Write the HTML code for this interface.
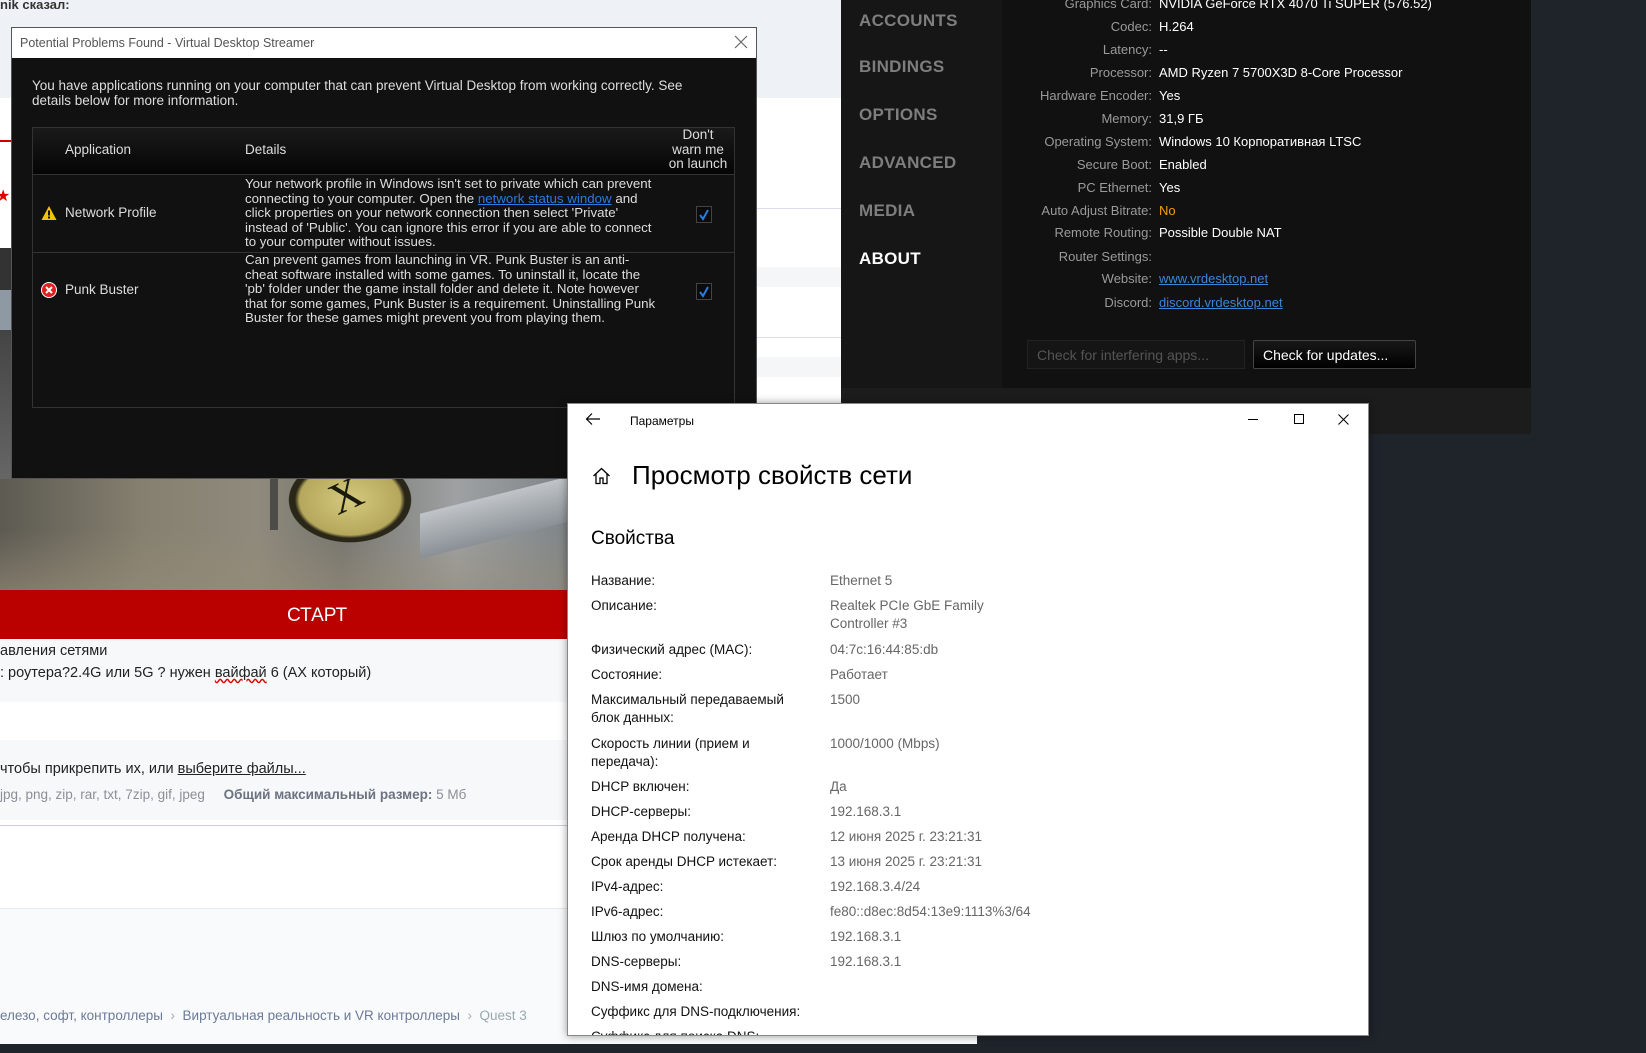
<!DOCTYPE html>
<html><head><meta charset="utf-8">
<style>
*{margin:0;padding:0;box-sizing:border-box}
body{width:1646px;height:1053px;overflow:hidden;background:#1f232a;position:relative;font-family:"Liberation Sans",sans-serif}
.a{position:absolute}
.n{font-family:"Liberation Sans",sans-serif}
.web{font-family:"Liberation Sans","DejaVu Sans",sans-serif;white-space:nowrap}
.vdl{color:#9a9a9a;text-align:right;width:300px;left:852px;font-size:13px}
.vdv{left:1159px;color:#fff;font-size:13px;white-space:nowrap}
.nav{left:859px;font-weight:bold;font-size:17px;color:#7e7e7e;letter-spacing:.3px}
.sl{left:591px;font-size:13.5px;color:#111;line-height:18px}
.sv{left:830px;font-size:13.5px;color:#666;line-height:18px}
</style></head><body>

<!-- web page -->
<div class="a" style="left:0;top:0;width:977px;height:1044px;background:#fff"></div>
<div class="a" style="left:0;top:0;width:841px;height:98px;background:#eef1f5"></div>
<div class="a web" style="left:0;top:-3px;font-size:13px;font-weight:bold;color:#333">nik сказал:</div>
<div class="a" style="left:757px;top:208px;width:84px;height:1px;background:#dde"></div>
<div class="a" style="left:757px;top:267px;width:84px;height:20px;background:#f5f6f8"></div>
<div class="a" style="left:757px;top:337px;width:84px;height:1px;background:#dde"></div>
<div class="a" style="left:757px;top:357px;width:84px;height:20px;background:#f5f6f8"></div>
<div class="a" style="left:0;top:140px;width:12px;height:2px;background:#c00"></div>
<div class="a" style="left:0;top:248px;width:12px;height:42px;background:#333"></div>
<div class="a" style="left:0;top:290px;width:12px;height:40px;background:#8e99a3"></div>
<div class="a" style="left:0;top:330px;width:12px;height:150px;background:linear-gradient(#444,#666)"></div>
<div class="a" style="left:-4px;top:186px;color:#d00;font-size:16px">★</div>
<!-- banner -->
<div class="a" style="left:0;top:479px;width:570px;height:111px;background:linear-gradient(90deg,#5d5a52 0%,#85806f 25%,#8f8a7c 45%,#76756f 60%,#9ea1a2 80%,#7e8488 100%)"></div>
<div class="a" style="left:0;top:530px;width:570px;height:60px;background:linear-gradient(180deg,rgba(90,85,75,0),rgba(150,140,120,.6))"></div>
<div class="a" style="left:285px;top:455px;width:130px;height:90px;border-radius:50%;background:radial-gradient(#d4c97e 0%,#b5a85c 55%,#2a2618 60%,#2a2618 66%,rgba(0,0,0,0) 67%)"></div>
<div class="a" style="left:330px;top:470px;font-size:44px;color:#1a1a10;font-family:'Liberation Serif',serif;transform:rotate(-25deg)">X</div>
<div class="a" style="left:420px;top:495px;width:150px;height:45px;background:linear-gradient(#c0c4c8,#8a9096);transform:skewY(-14deg)"></div>
<div class="a" style="left:270px;top:470px;width:8px;height:60px;background:#333;opacity:.7"></div>
<div class="a" style="left:0;top:590px;width:570px;height:49px;background:#bb0000"></div>
<div class="a web" style="left:287px;top:605px;color:#fff;font-size:19px">СТАРТ</div>
<div class="a" style="left:0;top:639px;width:570px;height:63px;background:#f7f8fa"></div>
<div class="a web" style="left:0;top:643px;font-size:14.5px;color:#222">авления сетями</div>
<div class="a web" style="left:0;top:665px;font-size:14.5px;color:#222">: роутера?2.4G или 5G ? нужен <span style="text-decoration:underline wavy #d00">вайфай</span> 6 (AX который)</div>
<div class="a" style="left:0;top:740px;width:570px;height:80px;background:#f7f8fa"></div>
<div class="a web" style="left:0;top:761px;font-size:14.5px;color:#222">чтобы прикрепить их, или <u>выберите файлы...</u></div>
<div class="a web" style="left:0;top:787px;font-size:13.5px;color:#8a8f98">jpg, png, zip, rar, txt, 7zip, gif, jpeg &nbsp;&nbsp;&nbsp; <b style="color:#6b7280">Общий максимальный размер:</b> 5 Мб</div>
<div class="a" style="left:0;top:825px;width:570px;height:1px;background:#ccd"></div>
<div class="a" style="left:0;top:909px;width:977px;height:135px;background:#f9fafb"></div>
<div class="a" style="left:0;top:908px;width:570px;height:1px;background:#e8e9ec"></div>
<div class="a web" style="left:0;top:1008px;font-size:13.5px;color:#6b7a99">елезо, софт, контроллеры &nbsp;<span style="color:#aaa">›</span>&nbsp; Виртуальная реальность и VR контроллеры &nbsp;<span style="color:#aaa">›</span>&nbsp; <span style="color:#9aa">Quest 3</span></div>

<!-- VD settings window -->
<div class="a" style="left:841px;top:0;width:690px;height:434px;background:#1c1c1c"></div>
<div class="a" style="left:841px;top:0;width:161px;height:388px;background:#161616"></div>
<div class="a" style="left:1002px;top:0;width:529px;height:388px;background:#111"></div>
<div class="a n nav" style="top:11px">ACCOUNTS</div>
<div class="a n nav" style="top:57px">BINDINGS</div>
<div class="a n nav" style="top:105px">OPTIONS</div>
<div class="a n nav" style="top:153px">ADVANCED</div>
<div class="a n nav" style="top:201px">MEDIA</div>
<div class="a n nav" style="top:249px;color:#fff">ABOUT</div>

<div class="a n vdl" style="top:-4px">Graphics Card:</div><div class="a n vdv" style="top:-4px">NVIDIA GeForce RTX 4070 Ti SUPER (576.52)</div>
<div class="a n vdl" style="top:19px">Codec:</div><div class="a n vdv" style="top:19px">H.264</div>
<div class="a n vdl" style="top:42px">Latency:</div><div class="a n vdv" style="top:42px">--</div>
<div class="a n vdl" style="top:65px">Processor:</div><div class="a n vdv" style="top:65px">AMD Ryzen 7 5700X3D 8-Core Processor</div>
<div class="a n vdl" style="top:88px">Hardware Encoder:</div><div class="a n vdv" style="top:88px">Yes</div>
<div class="a n vdl" style="top:111px">Memory:</div><div class="a n vdv" style="top:111px">31,9 ГБ</div>
<div class="a n vdl" style="top:134px">Operating System:</div><div class="a n vdv" style="top:134px">Windows 10 Корпоративная LTSC</div>
<div class="a n vdl" style="top:157px">Secure Boot:</div><div class="a n vdv" style="top:157px">Enabled</div>
<div class="a n vdl" style="top:180px">PC Ethernet:</div><div class="a n vdv" style="top:180px">Yes</div>
<div class="a n vdl" style="top:203px">Auto Adjust Bitrate:</div><div class="a n vdv" style="top:203px;color:#f0a000">No</div>
<div class="a n vdl" style="top:225px">Remote Routing:</div><div class="a n vdv" style="top:225px">Possible Double NAT</div>
<div class="a n vdl" style="top:249px">Router Settings:</div>
<div class="a n vdl" style="top:271px">Website:</div><div class="a n vdv" style="top:271px;color:#3a86d8;text-decoration:underline">www.vrdesktop.net</div>
<div class="a n vdl" style="top:295px">Discord:</div><div class="a n vdv" style="top:295px;color:#3a86d8;text-decoration:underline">discord.vrdesktop.net</div>
<div class="a n" style="left:1027px;top:340px;width:218px;height:29px;background:#151515;border:1px solid #222;color:#555;font-size:14px;padding:6px 0 0 9px">Check for interfering apps...</div>
<div class="a n" style="left:1253px;top:340px;width:163px;height:29px;background:linear-gradient(#181818,#000);border:1px solid #444;color:#fff;font-size:14px;padding:6px 0 0 9px;border-radius:2px">Check for updates...</div>

<!-- VD problems dialog -->
<div class="a" style="left:11px;top:27px;width:746px;height:452px;background:#111;border:1px solid #555"></div>
<div class="a" style="left:12px;top:28px;width:744px;height:30px;background:#fff"></div>
<div class="a n" style="left:20px;top:36px;font-size:12.5px;color:#555">Potential Problems Found - Virtual Desktop Streamer</div>
<svg class="a" style="left:734px;top:35px" width="14" height="14"><path d="M1 1L13 13M13 1L1 13" stroke="#666" stroke-width="1.2"/></svg>
<div class="a n" style="left:32px;top:78px;font-size:13.5px;color:#ddd;line-height:15px">You have applications running on your computer that can prevent Virtual Desktop from working correctly. See<br>details below for more information.</div>
<div class="a" style="left:32px;top:127px;width:703px;height:281px;border:1px solid #333;background:#111"></div>
<div class="a" style="left:33px;top:128px;width:701px;height:47px;background:linear-gradient(#1a1a1a,#050505);border-bottom:1px solid #333"></div>
<div class="a" style="left:33px;top:252px;width:701px;height:1px;background:#333"></div>
<div class="a n" style="left:65px;top:142px;font-size:13.5px;color:#ddd">Application</div>
<div class="a n" style="left:245px;top:142px;font-size:13.5px;color:#ddd">Details</div>
<div class="a n" style="left:660px;top:128px;width:76px;text-align:center;font-size:13.5px;color:#ddd;line-height:14.5px">Don't<br>warn me<br>on launch</div>
<svg class="a" style="left:41px;top:205px" width="16" height="16"><path d="M8 1L15.5 15H0.5Z" fill="#f5c400"/><rect x="7" y="5.5" width="2" height="5" fill="#111"/><rect x="7" y="11.5" width="2" height="2" fill="#111"/></svg>
<div class="a n" style="left:65px;top:205px;font-size:13.5px;color:#ddd">Network Profile</div>
<div class="a n" style="left:245px;top:177px;font-size:13.3px;color:#ddd;line-height:14.5px;white-space:nowrap">Your network profile in Windows isn't set to private which can prevent<br>connecting to your computer. Open the <span style="color:#2a7ae0;text-decoration:underline">network status window</span> and<br>click properties on your network connection then select 'Private'<br>instead of 'Public'. You can ignore this error if you are able to connect<br>to your computer without issues.</div>
<div class="a" style="left:696px;top:206px;width:16px;height:17px;border:1px solid #444;background:#0b0b0b"></div>
<svg class="a" style="left:698px;top:208px" width="12" height="13"><path d="M2 7L5 11L10 2" stroke="#2a7ae0" stroke-width="2" fill="none"/></svg>
<svg class="a" style="left:41px;top:282px" width="16" height="16"><circle cx="8" cy="8" r="7.5" fill="#e02020" stroke="#fff" stroke-width="1"/><path d="M5 5L11 11M11 5L5 11" stroke="#fff" stroke-width="2"/></svg>
<div class="a n" style="left:65px;top:282px;font-size:13.5px;color:#ddd">Punk Buster</div>
<div class="a n" style="left:245px;top:253px;font-size:13.3px;color:#ddd;line-height:14.5px;white-space:nowrap">Can prevent games from launching in VR. Punk Buster is an anti-<br>cheat software installed with some games. To uninstall it, locate the<br>'pb' folder under the game install folder and delete it. Note however<br>that for some games, Punk Buster is a requirement. Uninstalling Punk<br>Buster for these games might prevent you from playing them.</div>
<div class="a" style="left:696px;top:283px;width:16px;height:17px;border:1px solid #444;background:#0b0b0b"></div>
<svg class="a" style="left:698px;top:285px" width="12" height="13"><path d="M2 7L5 11L10 2" stroke="#2a7ae0" stroke-width="2" fill="none"/></svg>

<!-- Windows settings -->
<div class="a" style="left:567px;top:403px;width:802px;height:633px;background:#fff;border:1px solid #888;box-shadow:0 0 8px rgba(0,0,0,.4);overflow:hidden">
</div>
<svg class="a" style="left:585px;top:412px" width="16" height="14"><path d="M15 7H2M7 1.5L1.5 7L7 12.5" stroke="#000" stroke-width="1.2" fill="none"/></svg>
<div class="a" style="left:630px;top:414px;font-size:12px;color:#000">Параметры</div>
<div class="a" style="left:1248px;top:419px;width:10px;height:1px;background:#000"></div>
<div class="a" style="left:1294px;top:414px;width:10px;height:10px;border:1px solid #000"></div>
<svg class="a" style="left:1338px;top:414px" width="11" height="11"><path d="M0.5 0.5L10.5 10.5M10.5 0.5L0.5 10.5" stroke="#000" stroke-width="1"/></svg>
<svg class="a" style="left:592px;top:467px" width="19" height="18"><path d="M1.5 9L9.5 1.5L17.5 9M4 7V16.5H8V11H11V16.5H15V7" stroke="#000" stroke-width="1.3" fill="none"/></svg>
<div class="a" style="left:632px;top:460px;font-size:26px;color:#000">Просмотр свойств сети</div>
<div class="a" style="left:591px;top:528px;font-size:19px;color:#000">Свойства</div>
<div style="position:absolute;left:0;top:0;width:1369px;height:1035px;overflow:hidden">
<div class="a sl" style="top:572px">Название:</div><div class="a sv" style="top:572px">Ethernet 5</div>
<div class="a sl" style="top:597px">Описание:</div><div class="a sv" style="top:597px">Realtek PCIe GbE Family<br>Controller #3</div>
<div class="a sl" style="top:641px">Физический адрес (MAC):</div><div class="a sv" style="top:641px">04:7c:16:44:85:db</div>
<div class="a sl" style="top:666px">Состояние:</div><div class="a sv" style="top:666px">Работает</div>
<div class="a sl" style="top:691px">Максимальный передаваемый<br>блок данных:</div><div class="a sv" style="top:691px">1500</div>
<div class="a sl" style="top:735px">Скорость линии (прием и<br>передача):</div><div class="a sv" style="top:735px">1000/1000 (Mbps)</div>
<div class="a sl" style="top:778px">DHCP включен:</div><div class="a sv" style="top:778px">Да</div>
<div class="a sl" style="top:803px">DHCP-серверы:</div><div class="a sv" style="top:803px">192.168.3.1</div>
<div class="a sl" style="top:828px">Аренда DHCP получена:</div><div class="a sv" style="top:828px">12 июня 2025 г. 23:21:31</div>
<div class="a sl" style="top:853px">Срок аренды DHCP истекает:</div><div class="a sv" style="top:853px">13 июня 2025 г. 23:21:31</div>
<div class="a sl" style="top:878px">IPv4-адрес:</div><div class="a sv" style="top:878px">192.168.3.4/24</div>
<div class="a sl" style="top:903px">IPv6-адрес:</div><div class="a sv" style="top:903px">fe80::d8ec:8d54:13e9:1113%3/64</div>
<div class="a sl" style="top:928px">Шлюз по умолчанию:</div><div class="a sv" style="top:928px">192.168.3.1</div>
<div class="a sl" style="top:953px">DNS-серверы:</div><div class="a sv" style="top:953px">192.168.3.1</div>
<div class="a sl" style="top:978px">DNS-имя домена:</div>
<div class="a sl" style="top:1003px">Суффикс для DNS-подключения:</div>
<div class="a sl" style="top:1028px">Суффикс для поиска DNS:</div>
</div>
</body></html>
